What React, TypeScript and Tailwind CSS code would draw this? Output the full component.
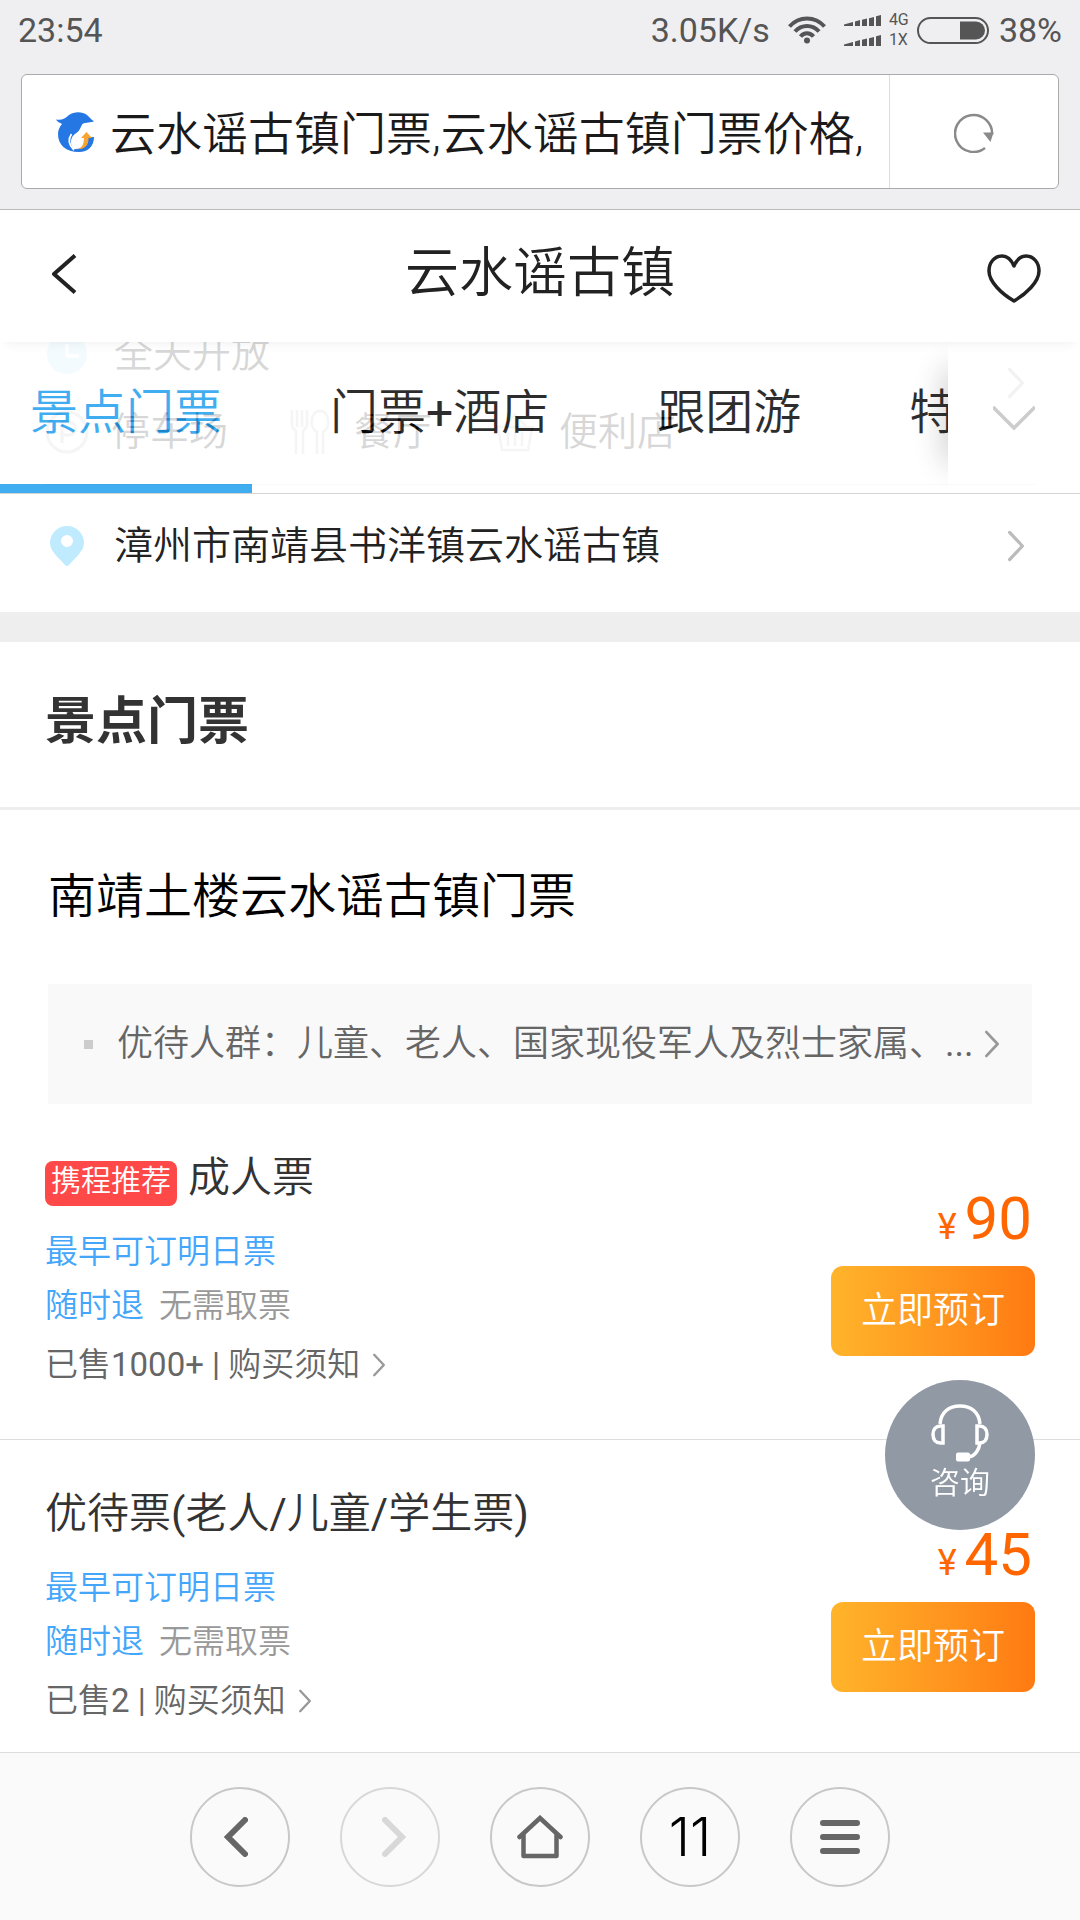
import type { ReactNode } from 'react';

const FONT = "font-['Roboto','Noto_Sans_CJK_SC',sans-serif]";

/* Chinese runs keep the lighter inherited weight, Latin runs are set in regular. */
function Mixed({ text }: { text: string }) {
  return (
    <>
      {text.split(/([\x20-\x7e]+)/).map((run, i) =>
        i % 2 === 1 ? (
          <span key={i} className="font-normal">{run}</span>
        ) : (
          run
        ),
      )}
    </>
  );
}

function Chevron({ className, weight = 4 }: { className: string; weight?: number }) {
  return (
    <svg viewBox="0 0 22 40" className={className} fill="none" stroke="currentColor" strokeWidth={weight} strokeLinecap="round" strokeLinejoin="round" aria-hidden="true">
      <path d="M3 3 19 20 3 37" />
    </svg>
  );
}

function SignalBars() {
  return (
    <svg viewBox="0 0 37 11" className="h-[11px] w-[37px]" fill="currentColor" aria-hidden="true">
      <path d="M0 11V9.500L9 7v4zM11 11V6.500L16 5v6zM18 11V4.700L23 3.500V11zM25 11V3.200L30 2v9zM32 11V1.200L37 0v11z" />
    </svg>
  );
}

function StatusBar() {
  return (
    <div className="flex h-[60px] items-center px-[18px] text-[34px] leading-[40px] text-[#555]">
      <span className="flex-1">23:54</span>
      <div className="flex items-center">
        <span>3.05K/s</span>
        <svg viewBox="0 0 38 28" className="ml-[18px] h-7 w-[38px]" fill="none" stroke="currentColor" strokeWidth="4" aria-hidden="true">
          <path d="M1.500 10.500C11 -.2 27 -.2 36.500 10.500" />
          <path d="M7 15.500C13.500 8 24.500 8 31 15.500" />
          <path d="M12.500 20.500C16 16 22 16 25.500 20.500" />
          <circle cx="19" cy="24.500" r="3" fill="currentColor" stroke="none" />
        </svg>
        <div className="ml-[18px] flex flex-col gap-[9px]">
          <SignalBars />
          <SignalBars />
        </div>
        <div className="ml-2 flex w-7 flex-col text-[16px] leading-[20px]">
          <span>4G</span>
          <span>1X</span>
        </div>
        <svg viewBox="0 0 72 27" className="h-[27px] w-[72px]" fill="none" aria-hidden="true">
          <rect x="1" y="1" width="70" height="25" rx="12.500" stroke="currentColor" strokeWidth="2" />
          <path d="M43 4.500h16a9 9 0 0 1 0 18H43z" fill="currentColor" />
        </svg>
        <span className="ml-[10px]">38%</span>
      </div>
    </div>
  );
}

function SiteIcon() {
  return (
    <svg viewBox="0 0 38 40" className="h-10 w-[38px] shrink-0" aria-hidden="true">
      <path d="M0 7.500C6 8.500 9 6.500 13 3 18-.5 26-.8 31 3c3 2.200 3.500 4.500 7 6.300-3 1.700-8 .7-11.500 2.700-2 2.500-2 6-5.500 8.500-4 2.500-6 5-6 9.500 0 3.500 1 5.500 3.500 7 8 .5 12.500-4 13-12H38c0 9-6 15-15 15C10 40 2 33 2 22c0-4 1.500-7 4-10C4 10.500 1 10 0 7.500z" fill="#2577e3" />
      <path d="M15.500 22c-3.500 5-2.500 11 2.500 16" stroke="#fff" strokeWidth="1.800" fill="none" />
      <path d="M19 37c6 1 9-4 9-11h-3l5.500-6 5.500 6h-3.500c.5 8-5 12.500-13.500 11z" fill="#f9a332" />
    </svg>
  );
}

function AddressBar() {
  return (
    <div className="mx-[21px] mb-5 flex h-[115px] rounded-md border border-[#aaa] bg-white">
      <div className="flex min-w-0 flex-1 items-center pl-[34px]">
        <SiteIcon />
        <input
          aria-label="网址"
          readOnly
          value="云水谣古镇门票,云水谣古镇门票价格,"
          className="ml-4 w-full min-w-0 bg-transparent pt-1 text-[46px] leading-[60px] font-[350] text-[#1a1a1a] outline-none"
        />
      </div>
      <button type="button" aria-label="刷新" className="flex w-[169px] shrink-0 items-center justify-center border-l border-[#ddd]">
        <svg viewBox="0 0 40 42" className="h-[42px] w-10 text-[#8a8a8a]" fill="none" aria-hidden="true">
          <path d="M31 37A18.500 18.500 0 1 1 38 24" stroke="currentColor" strokeWidth="2.500" />
          <path d="M29 21.500h10.500l-3 9.500z" fill="currentColor" />
        </svg>
      </button>
    </div>
  );
}

function TitleBar() {
  return (
    <header className="relative z-20 flex h-[132px] items-center justify-between bg-white px-[39px] shadow-[0_8px_10px_-6px_rgba(0,0,0,0.06)]">
      <button type="button" aria-label="返回" className="flex w-[54px] pb-1 pl-3 text-[#222]">
        <svg viewBox="0 0 26 40" className="h-10 w-[26px]" fill="none" stroke="currentColor" strokeWidth="4" strokeLinejoin="round" aria-hidden="true">
          <path d="M24 1.500 3 20l21 18.500" />
        </svg>
      </button>
      <h1 className="pb-1 text-[54px] leading-[64px] font-[350] text-[#222]">云水谣古镇</h1>
      <button type="button" aria-label="收藏" className="flex w-[54px] pt-1 text-[#222]">
        <svg viewBox="0 0 54 49" className="h-[49px] w-[54px]" fill="none" stroke="currentColor" strokeWidth="3.500" strokeLinejoin="round" aria-hidden="true">
          <path d="M27 12C24 5 20 2 15 2 7 2 2 9 2 17 2 28 15 40 27 47 39 40 52 28 52 17 52 9 47 2 39 2 34 2 30 5 27 12z" />
        </svg>
      </button>
    </header>
  );
}

function ClockIcon() {
  return (
    <svg viewBox="0 0 40 40" className="h-10 w-10" aria-hidden="true">
      <circle cx="20" cy="20" r="20" fill="#c0ebff" />
      <path d="M20 10v12h12" stroke="#fff" strokeWidth="3.500" fill="none" />
    </svg>
  );
}

function ParkingIcon() {
  return (
    <svg viewBox="0 0 44 44" className="h-11 w-11 text-[#c8c8c8]" fill="none" stroke="currentColor" strokeWidth="3" aria-hidden="true">
      <circle cx="22" cy="22" r="20" />
      <path d="M17 33V12h7a6 6 0 0 1 0 13h-7" />
    </svg>
  );
}

function DiningIcon() {
  return (
    <svg viewBox="0 0 40 46" className="h-[46px] w-10 text-[#c8c8c8]" fill="none" stroke="currentColor" strokeWidth="2.500" aria-hidden="true">
      <path d="M2 1v15c0 4 4 4 4 7v22M7 1v17M12 1v17M17 1v15c0 4-4 4-4 7v22M27 45V23c-8-4-7-21 3-21s11 17 3 21v22" />
    </svg>
  );
}

function BasketIcon() {
  return (
    <svg viewBox="0 0 40 40" className="h-10 w-10 text-[#c8c8c8]" fill="none" stroke="currentColor" strokeWidth="2.500" aria-hidden="true">
      <path d="M1 15h38M9 14 20 3l11 11M3 16l4 22h26l4-22M13 20v14M20 20v14M27 20v14" />
    </svg>
  );
}

function Facility({ icon, label, className }: { icon: ReactNode; label: string; className: string }) {
  return (
    <li className={`flex items-center ${className}`}>
      <span className="flex w-11 justify-center">{icon}</span>
      <span className="ml-[22px]">{label}</span>
    </li>
  );
}

function InfoSection() {
  return (
    <section className="relative text-[39px] leading-[48px] font-[350] text-[#222]">
      <div className="flex h-[142px] flex-col justify-between pb-7 pl-[45px]">
        <div className="-mt-3 flex items-center">
          <span className="flex w-11 justify-center"><ClockIcon /></span>
          <span className="ml-[25px]">全天开放</span>
        </div>
        <ul className="flex">
          <Facility icon={<ParkingIcon />} label="停车场" className="w-[243px]" />
          <Facility icon={<DiningIcon />} label="餐厅" className="w-[205px]" />
          <Facility icon={<BasketIcon />} label="便利店" className="" />
        </ul>
      </div>
      <div className="mx-[45px] border-t border-[#ddd]" />
      <a href="#address" className="flex h-[127px] items-center pr-[54px] pb-[6px] pl-[45px]">
        <span className="flex w-11 justify-center">
          <svg viewBox="0 0 34 40" className="h-10 w-[34px]" aria-hidden="true">
            <path fillRule="evenodd" d="M17 0A17 17 0 0 1 34 17C34 25 26 31 19 39Q17 41 15 39C8 31 0 25 0 17A17 17 0 0 1 17 0zM17 9a6 6 0 1 0 0 12 6 6 0 0 0 0-12z" fill="#c0ebff" />
          </svg>
        </span>
        <span className="ml-[25px] flex-1">漳州市南靖县书洋镇云水谣古镇</span>
        <Chevron className="h-8 w-5 text-[#bbb]" />
      </a>
      <Chevron className="absolute top-[25px] right-[54px] h-8 w-5 text-[#bbb]" />
      <TabBar />
    </section>
  );
}

const TABS = ['景点门票', '门票+酒店', '跟团游', '特色体验'];

function TabBar() {
  return (
    <nav className="absolute inset-x-0 top-0 z-10 flex h-[152px] border-b border-[#ccc] bg-white text-[48px] leading-[60px] opacity-[0.82]">
      <div className="relative flex min-w-0 flex-1 gap-12 overflow-hidden">
        {TABS.map((tab, i) => (
          <button
            type="button"
            key={tab}
            className={
              i === 0
                ? 'shrink-0 border-b-[9px] border-[#189cef] px-[30px] text-[#189cef]'
                : 'shrink-0 border-b-[9px] border-transparent px-[30px] text-black'
            }
          >
            <Mixed text={tab} />
          </button>
        ))}
        <div className="pointer-events-none absolute top-8 -right-5 h-[84px] w-5 shadow-[0_0_28px_6px_rgba(0,0,0,0.2)]" />
      </div>
      <button type="button" aria-label="展开全部" className="flex w-[132px] shrink-0 items-center pl-[45px] text-[#c1c1c1]">
        <svg viewBox="0 0 42 26" className="h-[26px] w-[42px]" fill="none" stroke="currentColor" strokeWidth="3.500" aria-hidden="true">
          <path d="M0 2 21 23 42 2" />
        </svg>
      </button>
    </nav>
  );
}

type Ticket = { name: string; badge?: string; sold: string; price: string };

const TICKETS: Ticket[] = [
  { name: '成人票', badge: '携程推荐', sold: '已售1000+', price: '90' },
  { name: '优待票(老人/儿童/学生票)', sold: '已售2', price: '45' },
];

function TicketRow({ ticket }: { ticket: Ticket }) {
  return (
    <li className="flex items-start border-b border-[#ddd] px-[45px] pt-[46px] pb-[46px] text-[33px] font-[350] last:border-b-0 last:pb-5">
      <div className="min-w-0 flex-1">
        <div className="flex items-start">
          {ticket.badge && (
            <span className="mt-[11px] mr-[11px] h-[45px] rounded-lg bg-[#ff4848] px-[6px] text-[30px] leading-[40px] text-white">{ticket.badge}</span>
          )}
          <h3 className="text-[42px] leading-[56px] text-[#333]"><Mixed text={ticket.name} /></h3>
        </div>
        <p className="mt-[19px] leading-[54px] text-[#44a6fb]">最早可订明日票</p>
        <p className="flex gap-[15px] leading-[54px] text-[#999]">
          <span className="text-[#44a6fb]">随时退</span>
          <span>无需取票</span>
        </p>
        <p className="flex items-center pt-1 leading-[56px] text-[#666]">
          <span><Mixed text={`${ticket.sold} |`} /></span>
          <a href="#notice" className="ml-2 flex items-center gap-3">
            购买须知
            <Chevron className="h-6 w-[14px] text-[#999]" />
          </a>
        </p>
      </div>
      <div className="flex flex-col items-end pt-[33px]">
        <p className="flex items-baseline gap-2 pr-[3px] text-[36px] leading-[72px] font-normal text-[#ff6600]">
          <span>¥</span>
          <span className="text-[60px]">{ticket.price}</span>
        </p>
        <button type="button" className="mt-[3px] h-[90px] w-[204px] rounded-xl bg-linear-to-r from-[#ffb42b] to-[#ff7a12] text-[36px] leading-[48px] text-white">
          立即预订
        </button>
      </div>
    </li>
  );
}

function ConsultButton() {
  return (
    <button type="button" className="fixed right-[45px] bottom-[390px] z-20 flex h-[150px] w-[150px] flex-col items-center rounded-full bg-[#8b93a0]/95 pt-6 text-white">
      <svg viewBox="0 0 58 58" className="h-[58px] w-[58px]" fill="none" stroke="currentColor" strokeWidth="3.500" aria-hidden="true">
        <path d="M9 20C10 8 18 2 29 2S48 8 49 20" />
        <path d="M12 22v17H9.500C5 39 2 36 2 30.500S5 22 9.500 22zM46 22v17h2.500c4.500 0 7.500-3 7.500-8.500S53 22 48.500 22z" />
        <path d="M49 39c-1 7-5 13-11 14" />
        <rect x="25" y="48.500" width="14" height="9" rx="2" fill="currentColor" stroke="none" />
      </svg>
      <span className="text-[30px] leading-[42px] font-[350]">咨询</span>
    </button>
  );
}

function RoundButton({ label, faded, children }: { label: string; faded?: boolean; children: ReactNode }) {
  return (
    <button
      type="button"
      aria-label={label}
      className={
        faded
          ? 'flex h-[100px] w-[100px] items-center justify-center rounded-full border-2 border-[#d8d8d8] text-[#d8d8d8]'
          : 'flex h-[100px] w-[100px] items-center justify-center rounded-full border-2 border-[#c8c8c8] text-[#666]'
      }
    >
      {children}
    </button>
  );
}

function Toolbar() {
  return (
    <nav className="flex h-[168px] shrink-0 items-center justify-center gap-[50px] border-t border-[#ddd] bg-[#fafafa]">
      <RoundButton label="后退">
        <svg viewBox="0 0 24 40" className="mr-2 h-10 w-6" fill="none" stroke="currentColor" strokeWidth="6" strokeLinecap="round" aria-hidden="true">
          <path d="M21 3 4 20 21 37" />
        </svg>
      </RoundButton>
      <RoundButton label="前进" faded>
        <svg viewBox="0 0 24 40" className="ml-2 h-10 w-6" fill="none" stroke="currentColor" strokeWidth="6" strokeLinecap="round" aria-hidden="true">
          <path d="M3 3 20 20 3 37" />
        </svg>
      </RoundButton>
      <RoundButton label="主页">
        <svg viewBox="0 0 46 44" className="h-11 w-[46px]" fill="none" stroke="currentColor" strokeWidth="4.500" strokeLinecap="round" aria-hidden="true">
          <path d="M2.500 22 23 3l20.500 19" />
          <path d="M6.500 20v21h33V20" strokeLinejoin="round" />
        </svg>
      </RoundButton>
      <RoundButton label="标签页 11">
        <span className="font-['Inter',sans-serif] text-[54px] leading-[60px] font-light text-black">11</span>
      </RoundButton>
      <RoundButton label="菜单">
        <svg viewBox="0 0 40 34" className="h-[34px] w-10" fill="currentColor" aria-hidden="true">
          <rect width="40" height="6" rx="3" />
          <rect y="14" width="40" height="6" rx="3" />
          <rect y="28" width="40" height="6" rx="3" />
        </svg>
      </RoundButton>
    </nav>
  );
}

export default function App() {
  return (
    <div className={`flex min-h-screen flex-col bg-white ${FONT}`} lang="zh-CN">
      <div className="border-b border-[#bbb] bg-[#efeff1]">
        <StatusBar />
        <div className="pt-[14px]">
          <AddressBar />
        </div>
      </div>
      <TitleBar />
      <main className="flex-1">
        <InfoSection />
        <section className="border-t-[30px] border-[#eee]">
          <h2 className="border-b-[3px] border-[#eee] px-[45px] pt-12 pb-[53px] text-[51px] leading-[64px] font-bold text-[#333]">景点门票</h2>
          <h3 className="px-12 pt-[57px] text-[48px] leading-[60px] font-[350] text-black">南靖土楼云水谣古镇门票</h3>
          <a href="#discount" className="mx-12 mt-[57px] flex h-[120px] items-center bg-[#f9f9f9] pr-8 pl-9 text-[36px] leading-[48px] font-[350] text-[#666]">
            <span className="h-[9px] w-[9px] shrink-0 bg-[#ccc]" />
            <span className="ml-6 min-w-0 flex-1 truncate">
              <Mixed text="优待人群：儿童、老人、国家现役军人及烈士家属、..." />
            </span>
            <Chevron className="h-7 w-4 shrink-0 text-[#999]" />
          </a>
          <ul>
            {TICKETS.map((t) => (
              <TicketRow key={t.name} ticket={t} />
            ))}
          </ul>
        </section>
      </main>
      <Toolbar />
      <ConsultButton />
    </div>
  );
}
